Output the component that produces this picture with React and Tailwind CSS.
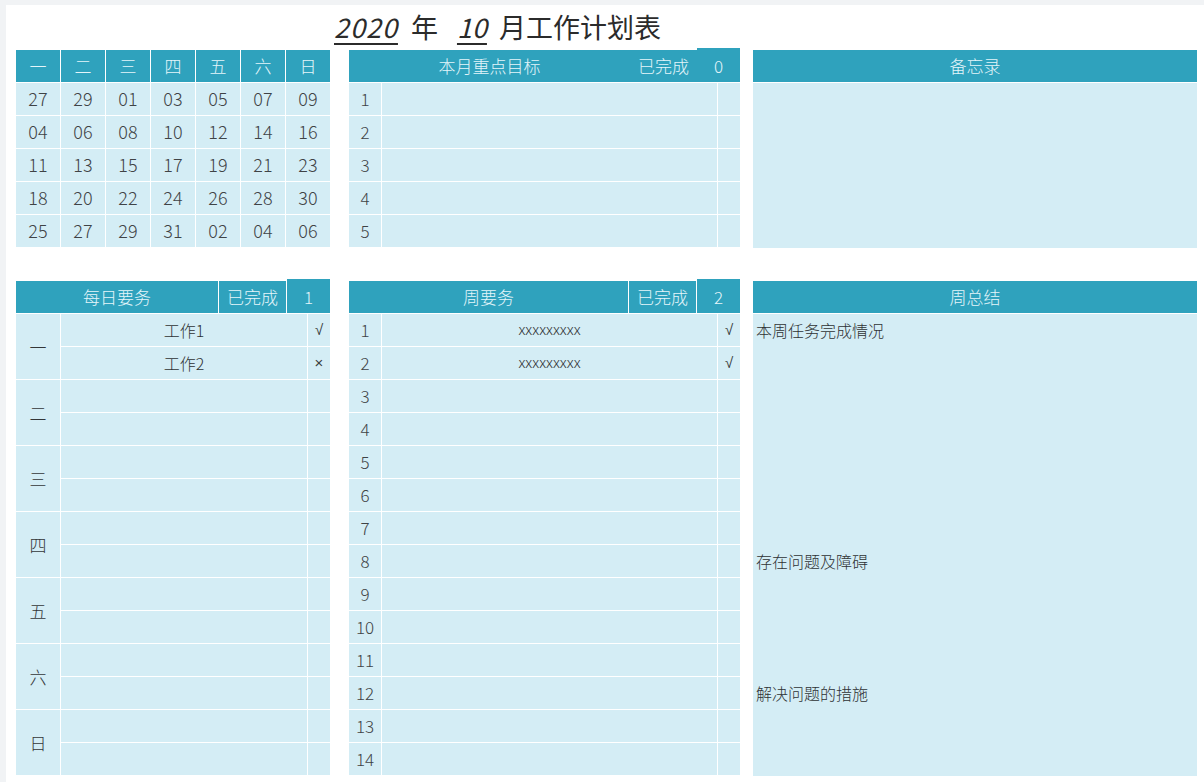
import React from "react";

const calHead = ["一", "二", "三", "四", "五", "六", "日"];
const calRows = [
    ["27", "29", "01", "03", "05", "07", "09"],
    ["04", "06", "08", "10", "12", "14", "16"],
    ["11", "13", "15", "17", "19", "21", "23"],
    ["18", "20", "22", "24", "26", "28", "30"],
    ["25", "27", "29", "31", "02", "04", "06"],
];

const daily = [
    { day: "一", tasks: [["工作1", "√"], ["工作2", "×"]] },
    { day: "二", tasks: [["", ""], ["", ""]] },
    { day: "三", tasks: [["", ""], ["", ""]] },
    { day: "四", tasks: [["", ""], ["", ""]] },
    { day: "五", tasks: [["", ""], ["", ""]] },
    { day: "六", tasks: [["", ""], ["", ""]] },
    { day: "日", tasks: [["", ""], ["", ""]] },
];

const weekly = Array.from({ length: 14 }, (_, i) => ({
    n: i + 1,
    text: i < 2 ? "xxxxxxxxx" : "",
    done: i < 2 ? "√" : "",
}));

const head = "bg-[#2fa2bd] text-[#e4f5fa] h-[32px] flex items-center justify-center text-[17px] pb-[1px]";
const cell = "bg-[#d4edf5] flex items-center";
const mark = "font-['Liberation_Sans',sans-serif] text-[15px] text-[#3a3e40]";

function CountHeader({ title, count, split }) {
    return (
        <div className="flex items-end h-[34px]">
            <div className={head + " flex-1"}>{title}</div>
            <div className={head + " w-[67px] " + (split ? "ml-px" : "")}>已完成</div>
            <div className={"bg-[#2fa2bd] text-[#e4f5fa] w-[43px] h-[34px] flex items-center justify-center text-[17px] pt-[1px] " + (split ? "ml-px" : "")}>
                {count}
            </div>
        </div>
    );
}

export default function App() {
    return (
        <div className="w-[1204px] h-[782px] bg-white border-l-[6px] border-t-[5px] border-[#f1f3f5] text-[#3f4346] font-['Noto_Sans_CJK_SC',sans-serif] font-light overflow-hidden">
            <div className="h-[44px] flex items-center pl-[326px] text-[27px] text-[#2b2b2b] font-normal">
                <span className="italic underline decoration-[1.5px] underline-offset-[5px] px-[2px] tracking-[1px]">2020</span>
                <span className="ml-[11px]">年</span>
                <span className="ml-[17px] italic underline decoration-[1.5px] underline-offset-[5px] px-[2px]">10</span>
                <span className="ml-[10px]">月工作计划表</span>
            </div>

            <div className="flex pl-[10px] mt-[-1px]">
                {/* calendar */}
                <div className="w-[314px] pt-[2px]">
                    <div className="grid grid-cols-7 gap-px bg-white">
                        {calHead.map((d) => (
                            <div key={d} className={head}>{d}</div>
                        ))}
                        {calRows.flat().map((d, i) => (
                            <div key={i} className={cell + " h-[32px] justify-center text-[18px] pb-[1px]"}>{d}</div>
                        ))}
                    </div>
                </div>

                {/* monthly goals */}
                <div className="w-[391px] ml-[19px]">
                    <CountHeader title="本月重点目标" count="0" split={false} />
                    <div className="grid grid-cols-[32px_1fr_22px] gap-px bg-white mt-px">
                        {[1, 2, 3, 4, 5].map((n) => (
                            <React.Fragment key={n}>
                                <div className={cell + " h-[32px] justify-center text-[17px] pb-[1px]"}>{n}</div>
                                <div className={cell + " h-[32px]"}></div>
                                <div className={cell + " h-[32px]"}></div>
                            </React.Fragment>
                        ))}
                    </div>
                </div>

                {/* memo */}
                <div className="w-[444px] ml-[13px] pt-[2px]">
                    <div className={head}>备忘录</div>
                    <div className="bg-[#d4edf5] h-[165px] mt-px"></div>
                </div>
            </div>

            <div className="flex pl-[10px] mt-[31px]">
                {/* daily tasks */}
                <div className="w-[314px]">
                    <CountHeader title="每日要务" count="1" split={true} />
                    <div className="grid grid-cols-[44px_1fr_22px] grid-rows-[repeat(14,32px)] gap-px bg-white mt-px">
                        {daily.map((d, i) => (
                            <React.Fragment key={d.day}>
                                <div
                                    className={cell + " justify-center text-[17px] text-[#333638]"}
                                    style={{ gridRow: `${i * 2 + 1} / span 2`, gridColumn: 1 }}
                                >
                                    {d.day}
                                </div>
                                {d.tasks.map((t, j) => (
                                    <React.Fragment key={j}>
                                        <div className={cell + " justify-center text-[16px] pb-[1px] text-[#2f3234]"} style={{ gridRow: i * 2 + 1 + j, gridColumn: 2 }}>
                                            {t[0]}
                                        </div>
                                        <div className={cell + " justify-center " + mark} style={{ gridRow: i * 2 + 1 + j, gridColumn: 3 }}>
                                            {t[1]}
                                        </div>
                                    </React.Fragment>
                                ))}
                            </React.Fragment>
                        ))}
                    </div>
                </div>

                {/* weekly tasks */}
                <div className="w-[391px] ml-[19px]">
                    <CountHeader title="周要务" count="2" split={true} />
                    <div className="grid grid-cols-[32px_1fr_22px] gap-px bg-white mt-px">
                        {weekly.map((w) => (
                            <React.Fragment key={w.n}>
                                <div className={cell + " h-[32px] justify-center text-[17px] pb-[1px]"}>{w.n}</div>
                                <div className={cell + " h-[32px] justify-center text-[15px] pb-[2px] text-[#2f3234]"}>{w.text}</div>
                                <div className={cell + " h-[32px] justify-center " + mark}>{w.done}</div>
                            </React.Fragment>
                        ))}
                    </div>
                </div>

                {/* weekly summary */}
                <div className="w-[444px] ml-[13px] pt-[2px]">
                    <div className={head}>周总结</div>
                    <div className="bg-[#d4edf5] mt-px grid grid-rows-[repeat(14,33px)] h-[462px] text-[16px] text-[#2f3234]">
                        <div className="row-start-1 flex items-center pl-[3px] pb-[2px]">本周任务完成情况</div>
                        <div className="row-start-8 flex items-center pl-[3px] pb-[2px]">存在问题及障碍</div>
                        <div className="row-start-12 flex items-center pl-[3px] pb-[2px]">解决问题的措施</div>
                    </div>
                </div>
            </div>
        </div>
    );
}
